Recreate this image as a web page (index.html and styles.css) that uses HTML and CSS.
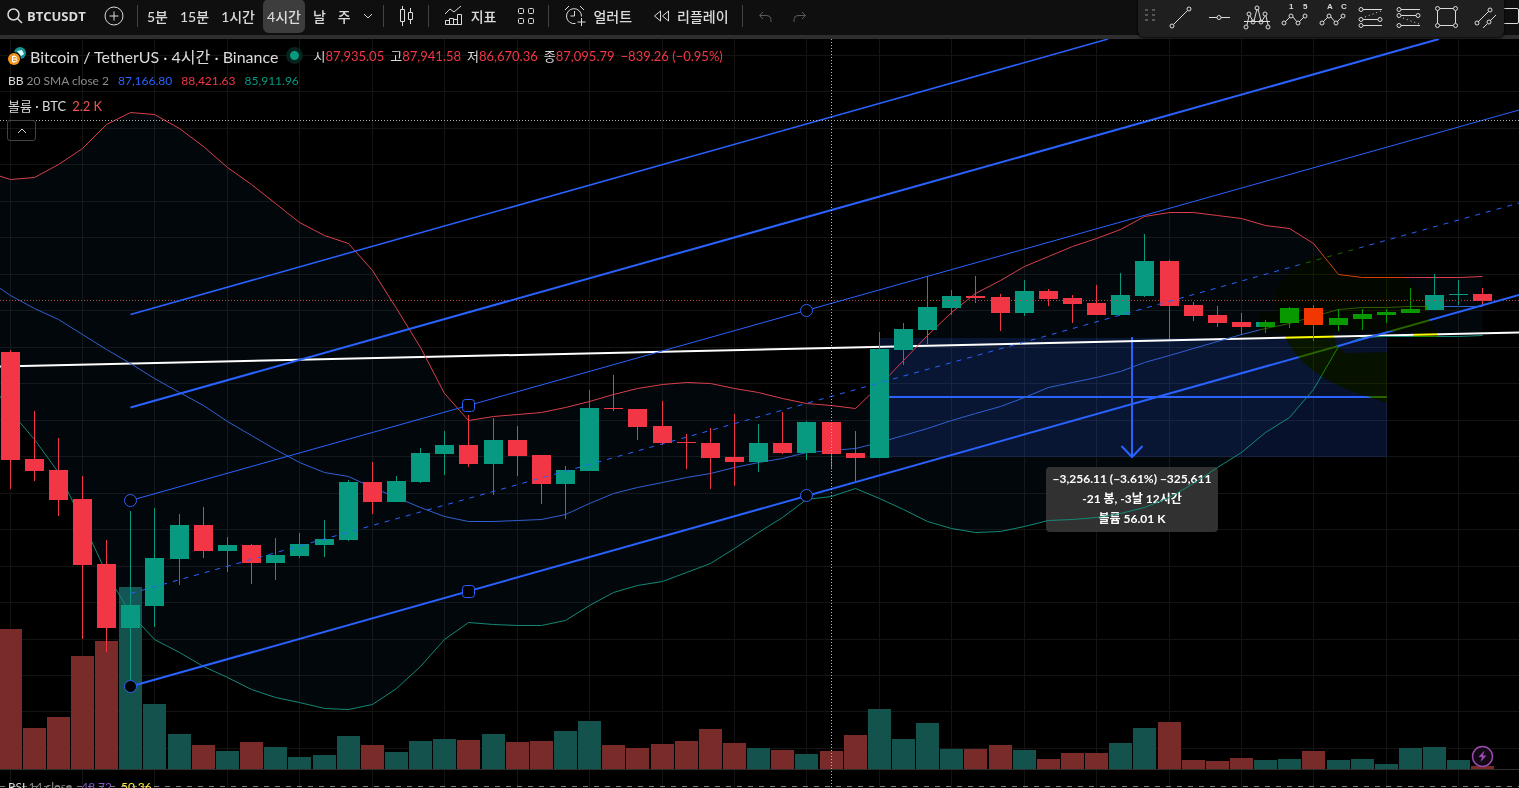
FILE: index.html
```html
<!DOCTYPE html>
<html lang="ko">
<head>
    <meta charset="utf-8">
    <title>BTCUSDT 4시간</title>
    <link rel="stylesheet" href="styles.css">
</head>
<body>
    <header class="topbar">
        <button class="symbol">
            <svg width="16" height="16" viewBox="0 0 16 16"><circle cx="6.5" cy="6.5" r="5.5"/><path d="M10.5 10.5 15 15"/></svg>
            BTCUSDT
        </button>
        <button class="compare" aria-label="비교">
            <svg width="20" height="20" viewBox="0 0 20 20"><circle cx="10" cy="10" r="9"/><path d="M10 5.500v9M5.500 10h9"/></svg>
        </button>
        <span class="sep"></span>
        <nav class="intervals">
            <button>5분</button>
            <button>15분</button>
            <button>1시간</button>
            <button class="active">4시간</button>
            <button>날</button>
            <button>주</button>
            <button aria-label="더보기"><svg width="10" height="6" viewBox="0 0 10 6"><path d="M1 1l4 4 4-4"/></svg></button>
        </nav>
        <span class="sep"></span>
        <button class="tool" aria-label="캔들">
            <svg width="16" height="20" viewBox="0 0 16 20"><path d="M1.500 3.500h4v12h-4zM3.500 0v3M3.500 16v4M9.500 6.500h4v7h-4zM11.500 2v4M11.500 14v4"/></svg>
        </button>
        <span class="sep"></span>
        <button class="tool">
            <svg width="20" height="20" viewBox="0 0 20 20"><path d="M1 8l5-5 4 3 7-6M1.500 18.500v-4h4v4zM5.500 18.500v-6h4v6M9.500 13.500h4v5M13.500 18.500v-10h4v10zM1.500 18.500h16"/></svg>
            지표
        </button>
        <button class="tool" aria-label="레이아웃">
            <svg width="18" height="18" viewBox="0 0 18 18"><rect x="1.500" y="1.500" width="5" height="5" rx="1"/><rect x="11.500" y="1.500" width="5" height="5" rx="1"/><rect x="1.500" y="11.500" width="5" height="5" rx="1"/><rect x="11.500" y="11.500" width="5" height="5" rx="1"/></svg>
        </button>
        <span class="sep"></span>
        <button class="tool">
            <svg width="22" height="22" viewBox="0 0 22 22"><path d="M17.500 11.500a7.500 7.500 0 1 0-6 7M10.500 6v5h-4M1 5l4-4M16 1l4 4M17.500 13v8M13.500 17h8"/></svg>
            얼러트
        </button>
        <button class="tool">
            <svg width="17" height="12" viewBox="0 0 17 12"><path d="M7.500 1v10L1.500 6zM15.500 1v10L9.500 6z"/></svg>
            리플레이
        </button>
        <span class="sep"></span>
        <button class="tool dim" aria-label="실행 취소">
            <svg width="14" height="11" viewBox="0 0 14 11"><path d="M5 1L1.500 4.500 5 8M2 4.500h7a4 4 0 0 1 4 4V11"/></svg>
        </button>
        <button class="tool dim" aria-label="다시 실행">
            <svg width="14" height="11" viewBox="0 0 14 11"><path d="M9 1l3.500 3.500L9 8M12 4.500H5a4 4 0 0 0-4 4V11"/></svg>
        </button>
        <button class="layout-btn" aria-label="레이아웃 설정">
            <svg width="15" height="18" viewBox="0 0 15 18"><path d="M0 1.500h13q1.500 0 1.500 1.500v12q0 1.500-1.500 1.500H0"/></svg>
        </button>
    </header>

    <div class="drawbar">
        <svg class="grip" width="10" height="14" viewBox="0 0 10 14"><path d="M0 1h3M7 1h3M0 6h3M7 6h3M0 11h3M7 11h3"/></svg>
        <button aria-label="추세선"><svg width="30" height="28" viewBox="0 0 30 28"><path d="M6.500 22.500l14-14"/><circle cx="5" cy="24" r="2"/><circle cx="22" cy="7" r="2"/></svg></button>
        <button aria-label="수평선"><svg width="30" height="28" viewBox="0 0 30 28"><path d="M4 15.500h8M16 15.500h9"/><circle cx="14" cy="15.500" r="2"/></svg></button>
        <button aria-label="헤드앤숄더"><svg width="30" height="28" viewBox="0 0 30 28"><path d="M1 19.500h26M4 23l2-9M7 14l3 5M11 19l3-12M15 7l3 12M19 19l3-5M23 14l2 9"/><circle cx="3" cy="25" r="2"/><circle cx="6" cy="12" r="2"/><circle cx="10" cy="20" r="2"/><circle cx="14" cy="6" r="2"/><circle cx="18" cy="20" r="2"/><circle cx="22" cy="12" r="2"/><circle cx="25" cy="25" r="2"/></svg></button>
        <button aria-label="엘리어트 임펄스"><svg width="30" height="28" viewBox="0 0 30 28"><path d="M4 20l5-5M12 15l4 5M18 20l5-5"/><circle cx="3" cy="21" r="2"/><circle cx="10" cy="14" r="2"/><circle cx="17" cy="21" r="2"/><circle cx="24" cy="14" r="2"/><text x="8" y="7">1</text><text x="22" y="7">5</text></svg></button>
        <button aria-label="엘리어트 조정"><svg width="30" height="28" viewBox="0 0 30 28"><path d="M4 20l5-5M12 15l4 5M18 20l5-5"/><circle cx="3" cy="21" r="2"/><circle cx="10" cy="14" r="2"/><circle cx="17" cy="21" r="2"/><circle cx="24" cy="14" r="2"/><text x="8" y="7">A</text><text x="22" y="7">C</text></svg></button>
        <button aria-label="피보나치 되돌림"><svg width="30" height="28" viewBox="0 0 30 28"><path d="M6 7.500h19M6 17.500h15M6 23.500h19"/><path class="dots" d="M8 15l16-6"/><circle cx="4" cy="7.500" r="2"/><circle cx="4" cy="17.500" r="2"/><circle cx="23" cy="17.500" r="2"/><circle cx="4" cy="23.500" r="2"/></svg></button>
        <button aria-label="피보나치 확장"><svg width="30" height="28" viewBox="0 0 30 28"><path d="M6 7.500h19M6 13.500h15M6 23.500h19"/><path class="dots" d="M8 16l16 6"/><circle cx="4" cy="7.500" r="2"/><circle cx="4" cy="13.500" r="2"/><circle cx="23" cy="13.500" r="2"/><circle cx="4" cy="23.500" r="2"/></svg></button>
        <button aria-label="사각형"><svg width="30" height="28" viewBox="0 0 30 28"><path d="M7 6.500h13M7 23.500h13M4.500 9v12M22.500 9v12"/><circle cx="4.500" cy="6.500" r="2"/><circle cx="22.500" cy="6.500" r="2"/><circle cx="4.500" cy="23.500" r="2"/><circle cx="22.500" cy="23.500" r="2"/></svg></button>
        <button aria-label="평행 채널"><svg width="30" height="28" viewBox="0 0 30 28"><path d="M7 20l11-11M12 26l4-4M19 19l6-6"/><circle cx="6" cy="21" r="2"/><circle cx="19" cy="8" r="2"/><circle cx="18" cy="20" r="2"/></svg></button>
    </div>

    <main class="chart">
        <svg id="plot" viewBox="0 39 1519 749" preserveAspectRatio="xMinYMin slice"></svg>

        <section class="legend">
            <div class="row title">
                <svg class="coins" width="18" height="18" viewBox="0 0 18 18">
                    <circle cx="12" cy="6" r="6" fill="#159191"/>
                    <path d="M9 4l5-1 2 4-3 2zM9 5l4 3" fill="#dff" stroke="none"/>
                    <circle cx="6" cy="12" r="7" fill="#000"/>
                    <circle cx="6" cy="12" r="6" fill="#f7931a"/>
                    <path d="M4.500 9v6M4 9.500h3q1.500 0 1.500 1.200T7 12H4.500M7 12q2 0 2 1.400T7 14.700H4M6 8v1.500M6 14.700V16" fill="none" stroke="#fff"/>
                </svg>
                <h1>Bitcoin / TetherUS · 4시간 · Binance</h1>
                <span class="live"></span>
                <span class="ohlc">시<b>87,935.05</b></span>
                <span class="ohlc">고<b>87,941.58</b></span>
                <span class="ohlc">저<b>86,670.36</b></span>
                <span class="ohlc">종<b>87,095.79</b></span>
                <span class="ohlc"><b>−839.26 (−0.95%)</b></span>
            </div>
            <div class="row">
                <span>BB <i>20 SMA close 2</i></span>
                <span class="blue">87,166.80</span>
                <span class="red">88,421.63</span>
                <span class="green">85,911.96</span>
            </div>
            <div class="row volume">
                <span>볼륨 · BTC</span>
                <span class="vol">2.2 K</span>
            </div>
            <button class="collapse" aria-label="접기"><svg width="10" height="6" viewBox="0 0 10 6"><path d="M1 5l4-4 4 4"/></svg></button>
        </section>

        <div class="row rsi">
            <span>RSI <i>14 close</i></span>
            <span class="purple">48.72</span>
            <span class="yellow">50.36</span>
        </div>
    </main>
    <script src="chart.js"></script>
</body>
</html>
```
FILE: styles.css
```css
:root {
    --bg: #000;
    --bar: #0f0f0f;
    --border: #2e2e2e;
    --text: #dbdbdb;
    --muted: #8c8c8c;
    --up: #089981;
    --down: #f23645;
    --blue: #2962ff;
}

* {
    box-sizing: border-box;
}

body {
    margin: 0;
    height: 100vh;
    display: flex;
    flex-direction: column;
    overflow: hidden;
    background: var(--bg);
    color: var(--text);
    font-family: Lato, "Noto Sans CJK KR", sans-serif;
    font-size: 13px;
}

button {
    display: flex;
    align-items: center;
    padding: 0;
    border: 0;
    background: none;
    color: inherit;
    font: inherit;
    cursor: pointer;
}

button svg {
    fill: none;
    stroke: currentColor;
    flex: none;
}

/* top toolbar */
.topbar {
    display: flex;
    align-items: center;
    flex: none;
    height: 39px;
    padding: 0 0 3px 7px;
    border-bottom: 4px solid var(--border);
    background: var(--bar);
    font-size: 14px;
    font-weight: 500;
    white-space: nowrap;
}

.symbol {
    gap: 4px;
    width: 97px;
    font-family: "Open Sans", sans-serif;
    font-size: 13px;
    font-weight: 700;
}

.symbol svg {
    stroke-width: 1.5;
}

.sep {
    width: 1px;
    height: 22px;
    margin: 0 15px 0 13px;
    background: #434343;
}

.intervals {
    display: flex;
    align-items: center;
    gap: 4px;
    margin-left: -10px;
    margin-right: -7px;
}

.intervals button {
    height: 34px;
    padding: 0 4px;
}

.intervals .active {
    border-radius: 6px;
    background: #3d3d3d;
}

.tool {
    gap: 7px;
}

.tool + .tool {
    margin-left: 21px;
}

.dim {
    color: #5a5a5a;
}

.layout-btn {
    margin-left: auto;
}

/* floating drawing toolbar */
.drawbar {
    position: absolute;
    top: 0;
    right: 15px;
    display: flex;
    align-items: center;
    gap: 8px;
    height: 37px;
    padding: 0 3px 5px 7px;
    border-radius: 0 0 6px 6px;
    background: #1f1f1f;
    box-shadow: 0 1px 3px #000;
}

.drawbar svg {
    display: block;
}

.grip {
    margin-right: 4px;
    fill: none;
    stroke: #555;
    stroke-width: 2;
}

.drawbar text {
    fill: var(--text);
    stroke: none;
    font-family: "Liberation Sans", sans-serif;
    font-size: 8px;
    font-weight: 700;
}

.dots {
    stroke-dasharray: 1 3;
}

/* chart */
.chart {
    position: relative;
    flex: 1;
    min-height: 0;
    overflow: hidden;
}

#plot {
    display: block;
    width: 100%;
    height: 100%;
}

.tip {
    fill: #fff;
    font-size: 12px;
    font-weight: 700;
    text-anchor: middle;
}

/* legend lies over the chart */
.legend {
    position: absolute;
    top: 4px;
    left: 7px;
}

.row {
    display: flex;
    align-items: center;
    gap: 9px;
    height: 25px;
    padding-left: 1px;
    font-size: 12px;
    white-space: nowrap;
}

.row i {
    color: var(--muted);
    font-style: normal;
}

.title,
.volume {
    gap: 6px;
    font-size: 13px;
}

h1 {
    margin: 0 2px 0 -2px;
    font-size: 16px;
    font-weight: 400;
}

.live {
    width: 17px;
    height: 17px;
    margin-right: 4px;
    border: 4px solid #06231e;
    border-radius: 50%;
    background: var(--up);
}

.ohlc b {
    font-weight: 400;
    color: var(--down);
}

.blue { color: var(--blue); }
.red { color: var(--down); }
.green { color: var(--up); }
.vol { color: #ef5350; }
.purple { color: #7e57c2; }
.yellow { color: #ffeb3b; }

.collapse {
    justify-content: center;
    width: 29px;
    height: 21px;
    margin-top: 2px;
    border: 1px solid #434343;
    border-radius: 3px;
}

.rsi {
    position: absolute;
    bottom: -11px;
    left: 7px;
}
```
FILE: chart.js
```js
const plot = document.getElementById('plot');

// [up, high, bodyTop, bodyBottom, low, volumeTop]
const bars = [
    [0, 350, 352, 460, 489, 629], [0, 411, 459, 471, 481, 728], [0, 438, 470, 500, 516, 717],
    [0, 476, 499, 565, 639, 656], [0, 540, 564, 628, 652, 641], [1, 511, 605, 628, 680, 587],
    [1, 508, 558, 606, 627, 704], [1, 514, 525, 559, 585, 734], [0, 507, 525, 551, 558, 745],
    [1, 537, 545, 551, 572, 751], [0, 544, 545, 563, 584, 742], [1, 538, 555, 563, 580, 747],
    [1, 533, 544, 556, 558, 757], [1, 520, 539, 545, 557, 755], [1, 480, 482, 540, 541, 736],
    [0, 462, 482, 502, 514, 745], [1, 476, 481, 502, 502, 752], [1, 448, 453, 482, 483, 741],
    [1, 431, 445, 454, 475, 739], [0, 415, 445, 464, 467, 740], [1, 418, 440, 464, 495, 734],
    [0, 426, 440, 456, 476, 742], [0, 455, 455, 484, 504, 741], [1, 466, 470, 484, 519, 731],
    [1, 390, 408, 471, 471, 721], [0, 375, 408, 409, 411, 745], [0, 409, 409, 427, 440, 748],
    [0, 401, 426, 443, 445, 744], [0, 434, 442, 443, 469, 741], [0, 428, 443, 458, 489, 729],
    [0, 414, 457, 462, 486, 743], [1, 424, 443, 462, 472, 748], [0, 412, 443, 453, 454, 750],
    [1, 421, 422, 453, 460, 754], [0, 422, 422, 454, 469, 751], [0, 431, 453, 458, 481, 735],
    [1, 332, 349, 458, 458, 709], [1, 323, 329, 350, 365, 739], [1, 276, 307, 330, 344, 723],
    [1, 290, 296, 308, 315, 749], [0, 276, 296, 298, 303, 749], [0, 294, 297, 313, 331, 745],
    [1, 280, 291, 313, 316, 750], [0, 289, 291, 299, 306, 759], [0, 295, 298, 304, 323, 753],
    [0, 285, 303, 315, 315, 753], [1, 273, 295, 315, 315, 743], [1, 234, 261, 296, 297, 728],
    [0, 260, 261, 306, 339, 722], [0, 302, 305, 316, 321, 760], [0, 306, 315, 323, 327, 761],
    [0, 313, 322, 327, 335, 758], [1, 320, 322, 327, 333, 760], [1, 307, 308, 323, 328, 759],
    [0, 305, 308, 325, 341, 751], [1, 309, 318, 325, 331, 760], [1, 309, 314, 319, 330, 759],
    [1, 309, 312, 315, 323, 764], [1, 288, 309, 313, 313, 748], [1, 274, 295, 310, 310, 747],
    [1, 280, 294, 295, 305, 760], [0, 288, 294, 301, 305, 766]
];

// Bollinger bands, first value is the bar left of the pane
const upper = [171, 179, 177, 164, 148, 124, 112, 114, 128, 146, 167, 184, 203, 222, 235, 243, 270, 308, 347,
    393, 420, 416, 414, 412, 407, 401, 394, 388, 384, 382, 383, 388, 392, 398, 403, 405, 408, 385, 360, 335,
    312, 293, 280, 266, 256, 246, 238, 229, 216, 212, 212, 215, 218, 225, 228, 243, 274, 277, 277, 277, 277, 277, 276];
const middle = [278, 295, 308, 319, 334, 349, 363, 378, 392, 405, 421, 435, 449, 462, 472, 476, 487, 497, 507,
    516, 521, 521, 520, 519, 514, 503, 493, 487, 482, 477, 473, 467, 462, 458, 452, 450, 448, 442, 435, 428,
    420, 413, 406, 397, 387, 382, 377, 371, 362, 355, 348, 341, 334, 328, 323, 316, 309, 307, 307, 306, 306, 306, 306];
const lower = [375, 411, 439, 472, 521, 573, 613, 639, 652, 666, 677, 689, 697, 702, 708, 709, 704, 688, 666,
    639, 622, 624, 625, 625, 620, 605, 592, 585, 581, 572, 563, 548, 532, 517, 499, 496, 488, 498, 509, 521,
    528, 532, 531, 526, 520, 519, 517, 513, 507, 497, 483, 467, 452, 432, 417, 389, 346, 337, 336, 336, 336, 336, 335];

const up = '#089981';
const down = '#f23645';
const blue = '#2962ff';

const barX = i => Math.floor(10.12 + 24.145 * i) + 0.5;
const line = (x1, y1, x2, y2, stroke, w = 1, extra = '') =>
    `<line x1="${x1}" y1="${y1}" x2="${x2}" y2="${y2}" stroke="${stroke}" stroke-width="${w}" ${extra}/>`;
const rect = (x, y, w, h, fill) => `<rect x="${x}" y="${y}" width="${w}" height="${h}" fill="${fill}"/>`;
const points = band => band.map((y, i) => `${barX(i - 1)},${y + 0.5}`);
const band = (data, stroke) =>
    `<polyline points="${points(data).join(' ')}" fill="none" stroke="${stroke}" stroke-width="1"/>`;

let out = '';

// grid
for (let i = 0; i < 63; i += 3) out += line(barX(i), 39, barX(i), 788, '#141414');
for (let i = 0; i < 20; i++) {
    const y = Math.floor(55.5 + 36.47 * i) + 0.5;
    out += line(0, y, 1519, y, '#141414');
}

// volume
bars.forEach((b, i) => {
    out += rect(barX(i) - 11.5, b[5], 23, 769 - b[5], b[0] ? '#14534d' : '#782b29');
});

out += `<polygon points="${points(upper).join(' ')} ${points(lower).reverse().join(' ')}" fill="#2080f3" fill-opacity="0.05"/>`;

// price range tool
out += rect(880, 338, 507, 119, 'rgba(41,98,255,0.17)');
out += line(880, 397, 1387, 397, blue, 2);
out += line(1132, 337, 1132, 456, blue, 2);
out += `<path d="M1121.500 446l10.500 11 10.500-11" fill="none" stroke="${blue}" stroke-width="2"/>`;
out += '<rect x="1046" y="467" width="172" height="65" rx="4" fill="#363636" fill-opacity="0.9"/>';
out += '<text class="tip" x="1132" y="483">−3,256.11 (−3.61%) −325,611</text>';
out += '<text class="tip" x="1132" y="503">-21 봉, -3날 12시간</text>';
out += '<text class="tip" x="1132" y="523">볼륨 56.01 K</text>';

out += line(0, 366.5, 1519, 332.5, '#fff', 2);
out += band(upper, '#d93f4b') + band(middle, '#2f5fd0') + band(lower, '#128a76');

// candles
bars.forEach((b, i) => {
    const color = b[0] ? up : down;
    const x = barX(i);
    out += line(x, b[1], x, b[4], color);
    out += rect(x - 9.5, b[2], 19, b[3] - b[2], color);
});

out += line(0, 300.5, 1519, 300.5, '#b04a4a', 1, 'stroke-dasharray="1 2"');

// channel
out += line(130.5, 314.5, 1108, 39, blue, 1.5);
out += line(130.5, 407.5, 1439, 39, blue, 2);
out += line(130.5, 500.5, 1519, 110, blue, 1);
out += line(130.5, 593.5, 1519, 203, blue, 1, 'stroke-dasharray="5 6"');
out += line(130.5, 686.5, 1519, 295, blue, 2);
[[130.5, 500.5], [806.5, 310.5], [806.5, 495.5], [130.5, 686.5]].forEach(([x, y]) => {
    out += `<circle cx="${x}" cy="${y}" r="6" fill="#000" stroke="${blue}"/>`;
});
[[462.5, 399.5], [462.5, 585.5]].forEach(([x, y]) => {
    out += `<rect x="${x}" y="${y}" width="12" height="12" rx="3" fill="#000" stroke="${blue}"/>`;
});

// yellow brush mark
out += `<path style="mix-blend-mode:multiply" fill="#ff0" fill-rule="evenodd" d="
    M1276 290Q1300 250 1358 246L1380 262Q1430 288 1428 318L1437 332V338H1413L1376 340L1387 350V403L1366 396
    Q1300 376 1283 332H1259V312H1276Z
    M1333 331H1413V338L1376 340L1387 350V352L1345 353L1336 345Z"/>`;

// pane border, RSI level and crosshair
out += line(0, 769.5, 1519, 769.5, '#2e2e2e');
out += line(0, 786.5, 1519, 786.5, '#787b86', 1, 'stroke-dasharray="5 6"');
out += line(0, 120.5, 1519, 120.5, '#b5b5b5', 1, 'stroke-dasharray="1 2"');
out += line(831.5, 39, 831.5, 788, '#b5b5b5', 1, 'stroke-dasharray="1 2"');

// event badge
out += '<circle cx="1482.500" cy="756.500" r="10" fill="#120816" stroke="#9c4bb0" stroke-width="1.500"/>';
out += '<path d="M1484.500 750.500l-6 6.500h3.500l-1.500 5 6-6.500h-3.500z" fill="#9c4bb0"/>';

plot.innerHTML = out;
```
